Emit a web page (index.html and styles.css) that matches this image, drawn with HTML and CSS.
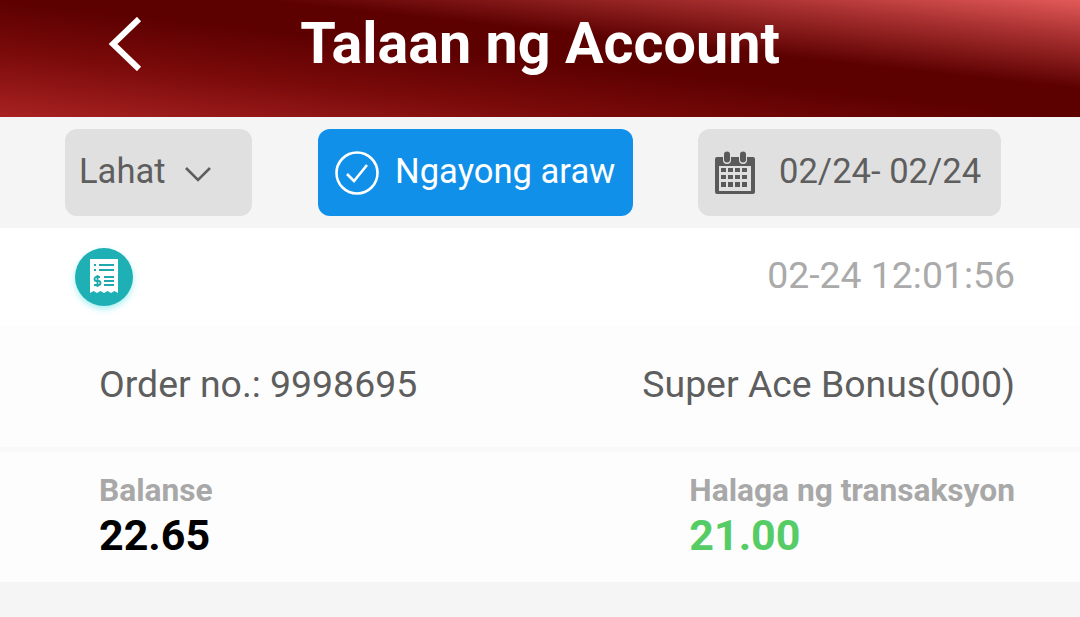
FILE: index.html
```html
<!DOCTYPE html>
<html lang="tl">
<head>
<meta charset="utf-8">
<title>Talaan ng Account</title>
<link rel="stylesheet" href="styles.css">
</head>
<body>
<header class="topbar">
  <svg class="back" width="34" height="54" viewBox="0 0 34 54"><path d="M31 2 L5 27 L31 52" fill="none" stroke="#fff" stroke-width="6"/></svg>
  <h1 class="title">Talaan ng Account</h1>
</header>
<nav class="filters">
  <div class="chip chip-all">
    <span>Lahat</span>
    <svg class="chev" width="28" height="16" viewBox="0 0 28 16"><path d="M2 2 L14 14 L26 2" fill="none" stroke="#5e5e5e" stroke-width="2.6"/></svg>
  </div>
  <div class="chip chip-today">
    <svg width="44" height="44" viewBox="0 0 44 44"><circle cx="22" cy="22" r="20.5" fill="none" stroke="#fff" stroke-width="2.6"/><path d="M12 23 L19 30 L32 14" fill="none" stroke="#fff" stroke-width="2.6"/></svg>
    <span>Ngayong araw</span>
  </div>
  <div class="chip chip-date">
    <svg width="40" height="44" viewBox="0 0 40 44">
      <path fill="#5a5a5a" d="M2 6h6v3a4 4 0 0 0 8 0V6h8v3a4 4 0 0 0 8 0V6h6a2 2 0 0 1 2 2v33a2 2 0 0 1-2 2H2a2 2 0 0 1-2-2V8a2 2 0 0 1 2-2z"/>
      <rect x="9" y="0.500" width="6" height="11" rx="3" fill="#5a5a5a"/><rect x="25" y="0.500" width="6" height="11" rx="3" fill="#5a5a5a"/>
      <rect x="4" y="15" width="32" height="25" fill="#e0e0e0"/>
      <path fill="#5a5a5a" d="M6 17h5v4H6zM13 17h5v4h-5zM20 17h5v4h-5zM27 17h5v4h-5zM6 24h5v4H6zM13 24h5v4h-5zM20 24h5v4h-5zM27 24h5v4h-5zM6 31h5v5H6zM13 31h5v5h-5zM20 31h5v5h-5zM27 31h5v5h-5z"/>
    </svg>
    <span>02/24- 02/24</span>
  </div>
</nav>
<section class="record">
  <div class="rec-top">
    <div class="badge">
      <svg width="30" height="36" viewBox="0 0 30 36">
        <path fill="#fff" d="M1 0h28v34l-3.500-2-3.500 2-3.500-2-3.500 2-3.500-2-3.500 2-3.500-2-3.500 2z"/>
        <path fill="none" stroke="#1fa9ae" stroke-width="2" d="M5 6h2M10 6h15M5 11h2M10 11h15M15 18h10M15 22h10M15 26h10"/>
        <path fill="none" stroke="#1fa9ae" stroke-width="1.800" d="M11 18H7.500a2 2 0 0 0 0 4h2a2 2 0 0 1 0 4H5M8.500 16v12"/>
      </svg>
    </div>
    <time class="stamp">02-24 12:01:56</time>
  </div>
  <div class="rec-order">
    <span>Order no.: 9998695</span>
    <span>Super Ace Bonus(000)</span>
  </div>
  <div class="rec-amounts">
    <div class="amount">
      <span class="amount-label">Balanse</span>
      <span class="amount-value">22.65</span>
    </div>
    <div class="amount">
      <span class="amount-label">Halaga ng transaksyon</span>
      <span class="amount-value amount-green">21.00</span>
    </div>
  </div>
</section>
</body>
</html>
```

FILE: styles.css
```css
* { box-sizing: border-box; }
html, body { margin: 0; height: 100%; overflow: hidden; }
body { background: #f5f5f5; font-family: Roboto, "Liberation Sans", sans-serif; }
.topbar {
  position: relative;
  height: 117px;
  display: flex;
  align-items: center;
  justify-content: center;
  background: linear-gradient(to top right, #a92222 0%, #7a0a0a 28%, #5c0000 50%, #5c0000 62%, #a83030 84%, #e25a58 100%);
}
.back { position: absolute; left: 108px; top: 17px; }
.title { margin: 0 0 29px; font-size: 57.500px; font-weight: 700; color: #fff; line-height: 1; }
.filters { height: 111px; padding: 12px 0 12px 65px; display: flex; gap: 66px; }
.chip {
  height: 87px;
  border-radius: 12px;
  display: flex;
  align-items: center;
  font-size: 34.600px;
  background: #e0e0e0;
  color: #5e5e5e;
}
.chip span { position: relative; top: -2px; }
.chip-all { width: 187px; padding-left: 14px; gap: 18px; }
.chev { margin-top: 3px; }
.chip-today { width: 315px; padding-left: 17px; gap: 16px; background: #1190ea; color: #fff; }
.chip-date { width: 303px; padding-left: 17px; gap: 24px; margin-left: -1px; }
.record { display: flex; flex-direction: column; }
.rec-top { height: 97px; background: #fff; padding: 20px 65px 0 75px; display: flex; justify-content: space-between; align-items: flex-start; }
.badge {
  width: 58px; height: 58px; border-radius: 50%;
  display: flex; align-items: center; justify-content: center;
  background: #1fb0b5;
  box-shadow: 0 3px 6px rgba(60, 220, 225, .45);
}
.stamp { font-size: 37.400px; color: #aaa; line-height: 55px; }
.rec-order {
  height: 122px; background: #fdfdfd;
  padding: 0 65px 4px 99px;
  display: flex; justify-content: space-between; align-items: center;
  font-size: 37.400px; color: #5e5e5e;
}
.rec-amounts {
  height: 135px; background: #fdfdfd;
  border-top: 5px solid #f9f9f9;
  padding: 0 65px 0 99px;
  display: flex; justify-content: space-between; align-items: center;
}
.amount { display: flex; flex-direction: column; position: relative; top: -1px; }
.amount-label { font-size: 31.700px; font-weight: 700; color: #a8a8a8; line-height: 38px; }
.amount-value { font-size: 43px; font-weight: 700; color: #000; line-height: 50px; }
.amount-green { color: #55cc66; }
```
